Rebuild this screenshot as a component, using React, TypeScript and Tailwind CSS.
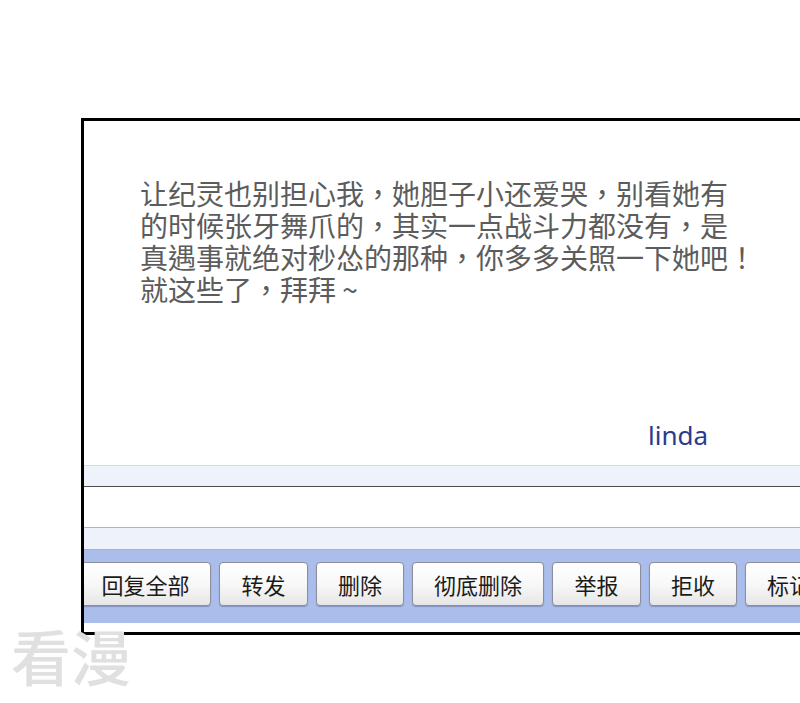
const lines = [
  "让纪灵也别担心我，她胆子小还爱哭，别看她有",
  "的时候张牙舞爪的，其实一点战斗力都没有，是",
  "真遇事就绝对秒怂的那种，你多多关照一下她吧！",
  "就这些了，拜拜 ~",
];

const buttons = [
  { label: "回复全部", width: "w-[131px]" },
  { label: "转发", width: "w-[89px]" },
  { label: "删除", width: "w-[88px]" },
  { label: "彻底删除", width: "w-[132px]" },
  { label: "举报", width: "w-[89px]" },
  { label: "拒收", width: "w-[88px]" },
  { label: "标记为", width: "w-[110px]" },
];

const cjk = "font-['Noto_Sans_CJK_SC','Noto_Sans',sans-serif]";

export default function App() {
  return (
    <div className="relative h-[703px] w-[800px] overflow-hidden bg-white">
      <div className="pl-[81px] pt-[118px]">
        <div className="flex h-[517px] w-[740px] flex-col border-[3px] border-r-0 border-black">
          <div className="flex h-[344px] flex-col pl-[56px] pt-[56px] pb-[15px]">
            <div className="font-['Noto_Sans_CJK_TC','Noto_Sans',sans-serif] text-[28px] leading-[32px] text-[#5c5c5c]">
              {lines.map((line) => (
                <div key={line} className="whitespace-nowrap">
                  {line}
                </div>
              ))}
            </div>
            <div className="mt-auto pl-[508px] font-['Noto_Sans',sans-serif] text-[26px] leading-[30px] text-[#2b3a8e]">
              linda
            </div>
          </div>
          <div className="h-px bg-[#d8dbe2]" />
          <div className="h-[20px] bg-[#eef2fb]" />
          <div className="h-px bg-[#4e4e4e]" />
          <div className="h-[40px] bg-white" />
          <div className="h-px bg-[#b3b3b3]" />
          <div className="h-[21px] bg-[#eef2fb]" />
          <div className="h-[74px] overflow-hidden border-t border-[#9db0e0] bg-[#abbdea] pt-[12px]">
            <div className="-ml-[4px] flex gap-2">
              {buttons.map((b) => (
                <div
                  key={b.label}
                  className={`${b.width} ${cjk} flex h-[44px] shrink-0 items-center justify-center rounded-[4px] border border-[#8b8f99] bg-gradient-to-b from-white via-[#f8f8f8] to-[#e6e6e6] text-[22px] text-[#1a1a1a] shadow-[0_1px_1px_rgba(60,70,110,0.35)]`}
                >
                  {b.label}
                </div>
              ))}
            </div>
          </div>
          <div className="flex-1 bg-white" />
        </div>
      </div>
      <div
        className={`${cjk} absolute left-[11px] top-[619px] text-[60px] font-medium leading-[72px] text-[#e0e0e0]`}
      >
        看漫
      </div>
    </div>
  );
}
